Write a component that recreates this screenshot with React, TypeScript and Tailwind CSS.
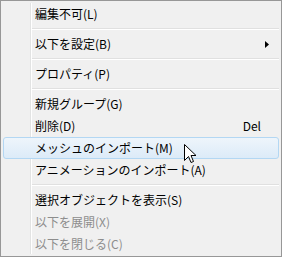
import React from "react";

const font = { fontFamily: '"Noto Sans CJK JP", "Noto Sans", sans-serif' };

function Item({
  label,
  shortcut,
  arrow,
  disabled,
  hover,
}: {
  label: string;
  shortcut?: string;
  arrow?: boolean;
  disabled?: boolean;
  hover?: boolean;
}) {
  return (
    <div className="relative h-[22px] flex items-center">
      {hover && (
        <div className="absolute left-0 right-0 top-0 bottom-0 rounded-[3px] border border-[#b3d7f3] bg-gradient-to-b from-[#eef5fb] to-[#dcebf8]" />
      )}
      <span
        className={`relative pl-[32px] text-[12px] leading-none ${disabled ? "text-[#8d8d8d]" : "text-black"}`}
      >
        {label}
      </span>
      {shortcut && (
        <span className="relative ml-auto mr-[18px] text-[12px] leading-none text-black">{shortcut}</span>
      )}
      {arrow && (
        <svg className="relative ml-auto mr-[10px]" width="4" height="7" viewBox="0 0 4 7">
          <path d="M0 0 L4 3.5 L0 7 Z" fill="#000" />
        </svg>
      )}
    </div>
  );
}

function Sep() {
  return (
    <div className="h-[8px] flex flex-col justify-center pl-[28px]">
      <div className="h-px bg-[#e0e0e0]" />
      <div className="h-px bg-white" />
    </div>
  );
}

export default function App() {
  return (
    <div className="w-[283px] h-[258px] bg-white" style={font}>
      <div className="relative w-[282px] h-[257px] border border-[#979797] bg-[#f0f0f0] p-[2px]">
        <div className="absolute top-[2px] bottom-[2px] left-[29px] w-[2px] flex">
          <div className="w-px bg-[#e2e3e3]" />
          <div className="w-px bg-white" />
        </div>
        <Item label="編集不可(L)" />
        <Sep />
        <Item label="以下を設定(B)" arrow />
        <Sep />
        <Item label="プロパティ(P)" />
        <Sep />
        <Item label="新規グループ(G)" />
        <Item label="削除(D)" shortcut="Del" />
        <Item label="メッシュのインポート(M)" hover />
        <Item label="アニメーションのインポート(A)" />
        <Sep />
        <Item label="選択オブジェクトを表示(S)" />
        <Item label="以下を展開(X)" disabled />
        <Item label="以下を閉じる(C)" disabled />
        <svg className="absolute left-[183px] top-[143px]" width="13" height="20" viewBox="0 0 13 20">
          <path
            d="M0.5 0.5 L0.5 16.5 L4.5 12.5 L7 18.5 L9.5 17.5 L7 11.5 L12 11.5 Z"
            fill="#fff"
            stroke="#000"
            strokeWidth="1"
            strokeLinejoin="miter"
          />
        </svg>
      </div>
    </div>
  );
}
